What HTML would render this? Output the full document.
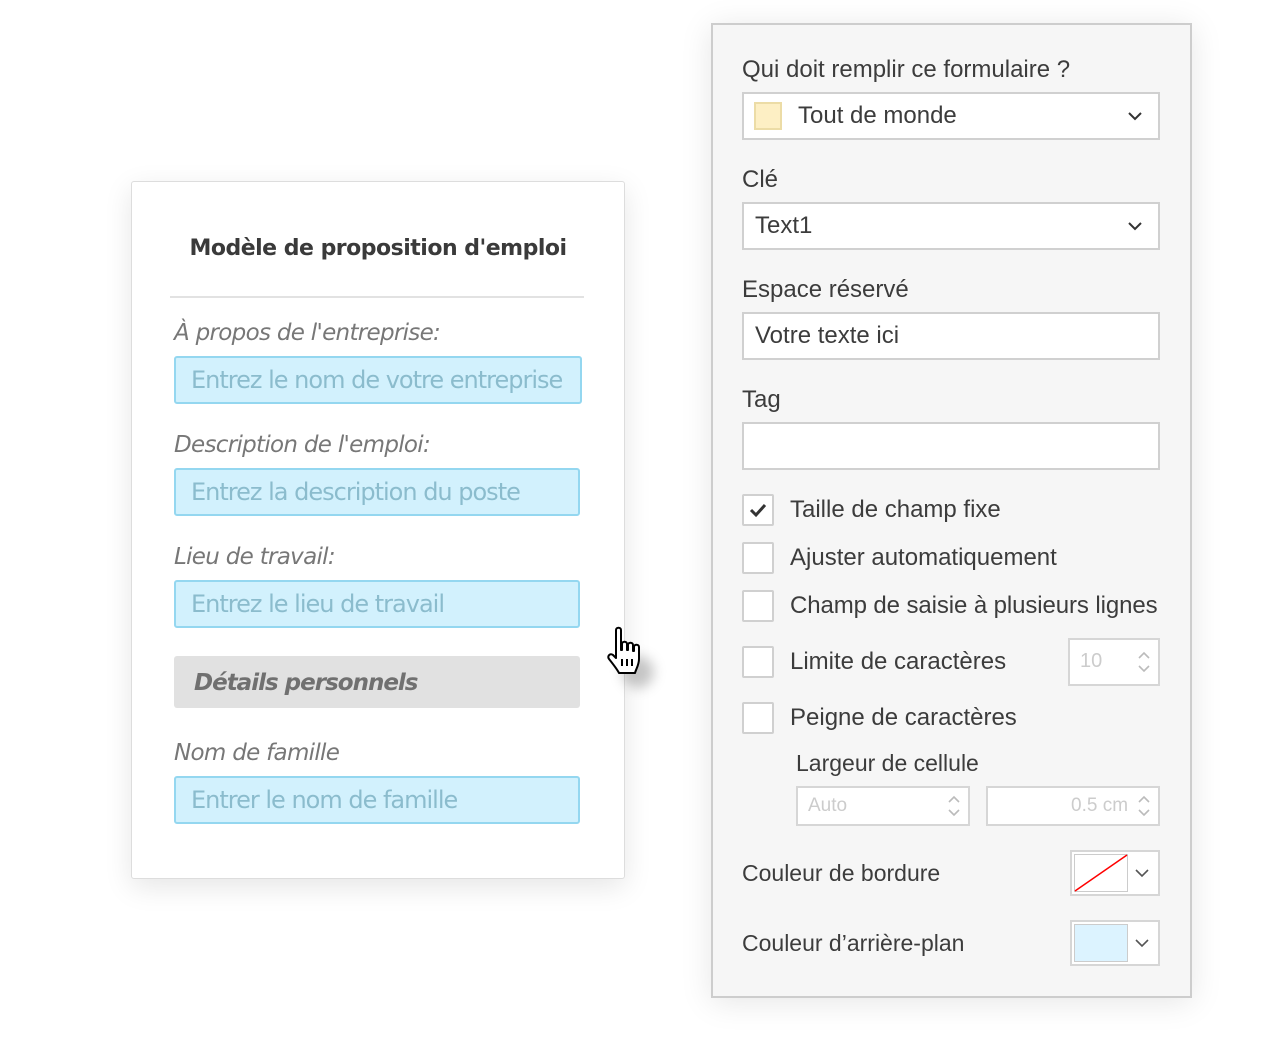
<!DOCTYPE html>
<html><head><meta charset="utf-8"><style>
*{margin:0;padding:0;box-sizing:border-box}
body{width:1280px;height:1060px;background:#fff;position:relative;overflow:hidden;font-family:"Liberation Sans","DejaVu Sans",sans-serif}
.a{position:absolute}
.card{left:131px;top:181px;width:494px;height:698px;background:#fff;border:1px solid #ddd;border-radius:3px;box-shadow:0 8px 28px rgba(0,0,0,.10)}
.title{left:131px;width:494px;top:236px;text-align:center;font-weight:bold;font-size:22px;color:#3a3a3a;font-family:"DejaVu Sans","Liberation Sans",sans-serif;letter-spacing:-0.5px}
.hr{left:170px;top:296px;width:414px;height:2px;background:#e2e2e2}
.lbl{font-style:italic;font-size:23px;color:#777;font-family:"DejaVu Sans","Liberation Sans",sans-serif;letter-spacing:-0.7px}
.inp{height:48px;background:#d2f1fd;border:2px solid #94d7f0;border-radius:3px;font-size:24px;color:#8bbccd;padding:8px 0 0 15px;font-family:"DejaVu Sans","Liberation Sans",sans-serif;letter-spacing:-1px;white-space:nowrap;overflow:hidden}
.panel{left:711px;top:23px;width:481px;height:975px;background:#f6f6f6;border:2px solid #cdcdcd;box-shadow:0 4px 30px rgba(0,0,0,.10)}
.t{font-size:24px;color:#3c3c3c;white-space:nowrap}
.box{left:742px;width:418px;height:48px;background:#fff;border:2px solid #d0d0d0}
.cb{left:742px;width:32px;height:32px;background:#fff;border:2px solid #d0d0d0;border-radius:2px}
.chev{position:absolute}
</style></head><body>
<div class="a card"></div>
<div class="a title">Modèle de proposition d'emploi</div>
<div class="a hr"></div>
<div class="a lbl" style="left:174px;top:320px">À propos de l'entreprise:</div>
<div class="a inp" style="left:174px;top:356px;width:408px">Entrez le nom de votre entreprise</div>
<div class="a lbl" style="left:174px;top:432px">Description de l'emploi:</div>
<div class="a inp" style="left:174px;top:468px;width:406px">Entrez la description du poste</div>
<div class="a lbl" style="left:174px;top:544px">Lieu de travail:</div>
<div class="a inp" style="left:174px;top:580px;width:406px">Entrez le lieu de travail</div>
<div class="a" style="left:174px;top:656px;width:406px;height:52px;background:#e1e1e1;border-radius:3px"></div>
<div class="a lbl" style="left:194px;top:670px;font-weight:bold;color:#707070;letter-spacing:-1px">Détails personnels</div>
<div class="a lbl" style="left:174px;top:740px">Nom de famille</div>
<div class="a inp" style="left:174px;top:776px;width:406px">Entrer le nom de famille</div>

<div class="a panel"></div>
<div class="a t" style="left:742px;top:56px">Qui doit remplir ce formulaire ?</div>
<div class="a box" style="top:92px"></div>
<div class="a" style="left:754px;top:102px;width:28px;height:28px;background:#fdefc4;border:2px solid #ecdca6"></div>
<div class="a t" style="left:798px;top:102px">Tout de monde</div>
<svg class="chev" style="left:1127px;top:110px" width="16" height="12"><path d="M2 3l6 6 6-6" fill="none" stroke="#333" stroke-width="2"/></svg>
<div class="a t" style="left:742px;top:166px">Clé</div>
<div class="a box" style="top:202px"></div>
<div class="a t" style="left:755px;top:212px">Text1</div>
<svg class="chev" style="left:1127px;top:220px" width="16" height="12"><path d="M2 3l6 6 6-6" fill="none" stroke="#333" stroke-width="2"/></svg>
<div class="a t" style="left:742px;top:276px">Espace réservé</div>
<div class="a box" style="top:312px"></div>
<div class="a t" style="left:755px;top:322px">Votre texte ici</div>
<div class="a t" style="left:742px;top:386px">Tag</div>
<div class="a box" style="top:422px"></div>

<div class="a cb" style="top:494px"></div>
<svg class="a" style="left:749px;top:502px" width="18" height="16"><path d="M2 8l5 5 9-10" fill="none" stroke="#333" stroke-width="3"/></svg>
<div class="a t" style="left:790px;top:496px">Taille de champ fixe</div>
<div class="a cb" style="top:542px"></div>
<div class="a t" style="left:790px;top:544px">Ajuster automatiquement</div>
<div class="a cb" style="top:590px"></div>
<div class="a t" style="left:790px;top:592px;letter-spacing:-0.1px">Champ de saisie à plusieurs lignes</div>
<div class="a cb" style="top:646px"></div>
<div class="a t" style="left:790px;top:648px">Limite de caractères</div>
<div class="a" style="left:1068px;top:638px;width:92px;height:48px;background:#fff;border:2px solid #d6d6d6"></div>
<div class="a t" style="left:1080px;top:650px;font-size:20px;color:#ccc">10</div>
<svg class="a" style="left:1137px;top:651px" width="14" height="22"><path d="M2 7l5-5 5 5M2 15l5 5 5-5" fill="none" stroke="#bbb" stroke-width="1.6"/></svg>
<div class="a cb" style="top:702px"></div>
<div class="a t" style="left:790px;top:704px">Peigne de caractères</div>
<div class="a t" style="left:796px;top:750px;font-size:23px">Largeur de cellule</div>
<div class="a" style="left:796px;top:786px;width:174px;height:40px;background:#fff;border:2px solid #d6d6d6"></div>
<div class="a t" style="left:808px;top:795px;font-size:19px;color:#ccc">Auto</div>
<svg class="a" style="left:947px;top:795px" width="14" height="22"><path d="M2 7l5-5 5 5M2 15l5 5 5-5" fill="none" stroke="#bbb" stroke-width="1.6"/></svg>
<div class="a" style="left:986px;top:786px;width:174px;height:40px;background:#fff;border:2px solid #d6d6d6"></div>
<div class="a t" style="left:1071px;top:795px;font-size:19px;color:#ccc">0.5 cm</div>
<svg class="a" style="left:1137px;top:795px" width="14" height="22"><path d="M2 7l5-5 5 5M2 15l5 5 5-5" fill="none" stroke="#bbb" stroke-width="1.6"/></svg>

<div class="a t" style="left:742px;top:860px;font-size:23px">Couleur de bordure</div>
<div class="a" style="left:1070px;top:850px;width:90px;height:46px;background:#fff;border:2px solid #d6d6d6"></div>
<div class="a" style="left:1074px;top:854px;width:54px;height:38px;background:#fff;border:1px solid #ccc"></div>
<svg class="a" style="left:1074px;top:854px" width="54" height="38"><path d="M1 37L53 1" stroke="#f00" stroke-width="1.5"/></svg>
<svg class="chev" style="left:1134px;top:867px" width="16" height="12"><path d="M2 3l6 6 6-6" fill="none" stroke="#555" stroke-width="1.6"/></svg>
<div class="a t" style="left:742px;top:930px;font-size:23px">Couleur d’arrière-plan</div>
<div class="a" style="left:1070px;top:920px;width:90px;height:46px;background:#fff;border:2px solid #d6d6d6"></div>
<div class="a" style="left:1074px;top:924px;width:54px;height:38px;background:#dcf3ff;border:1px solid #ccc"></div>
<svg class="chev" style="left:1134px;top:937px" width="16" height="12"><path d="M2 3l6 6 6-6" fill="none" stroke="#555" stroke-width="1.6"/></svg>

<svg class="a" style="left:590px;top:610px" width="90" height="96">
<defs><filter id="b" x="-50%" y="-50%" width="200%" height="200%"><feGaussianBlur stdDeviation="6"/></filter></defs>
<ellipse cx="48" cy="62" rx="16" ry="16" fill="rgba(0,0,0,.22)" filter="url(#b)"/>
<g transform="translate(8,12)">
<path d="M18 8c0-3 5-3 5 0v20h1v-6c0-3 5-3 5 0v6h1v-5c0-3 5-3 5 0v6h1v-4c0-3 5-3 5 0v12c0 6-3 10-4 14H21c-2-4-6-9-10-14-2-3 1-6 4-4l3 3z" fill="#fff" stroke="#000" stroke-width="2" stroke-linejoin="round"/>
<path d="M24 37v7M29 37v7M34 37v7" stroke="#000" stroke-width="2"/>
</g>
</svg>
</body></html>
